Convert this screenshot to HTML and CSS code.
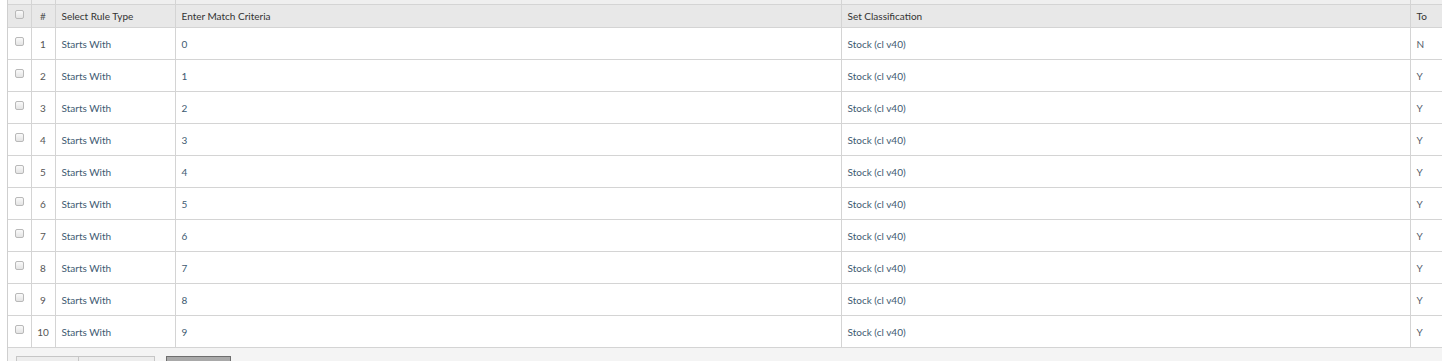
FILE: index.html
```html
<!DOCTYPE html>
<html lang="en">
<head>
  <meta charset="UTF-8" />
  <title>Classification Rules</title>
  <link rel="stylesheet" href="styles.css">
</head>
<body>

  <div class="panel">
    <div class="grid-wrap">
      <table class="rules">
        <colgroup>
          <col class="c-check">
          <col class="c-num">
          <col class="c-type">
          <col class="c-crit">
          <col class="c-class">
          <col class="c-to">
        </colgroup>
        <thead>
          <tr class="group-row">
            <th></th><th></th><th></th><th></th><th></th><th></th>
          </tr>
          <tr class="head-row">
            <th class="check"><input type="checkbox" class="box"></th>
            <th class="num">#</th>
            <th>Select Rule Type</th>
            <th>Enter Match Criteria</th>
            <th>Set Classification</th>
            <th>To</th>
          </tr>
        </thead>
        <tbody id="rows"></tbody>
      </table>
    </div>

    <div class="footer">
      <div class="btn-group">
        <button class="btn">&nbsp;</button>
        <button class="btn wide">&nbsp;</button>
      </div>
      <button class="btn dark">&nbsp;</button>
    </div>
  </div>

  <script>
    const rows = document.getElementById("rows");
    for (let i = 0; i < 10; i++) {
      const tr = document.createElement("tr");
      tr.innerHTML = `
        <td class="check"><input type="checkbox" class="box"></td>
        <td class="num">${i + 1}</td>
        <td>Starts With</td>
        <td>${i}</td>
        <td>Stock (cl v40)</td>
        <td class="flag">${i === 0 ? "N" : "Y"}</td>
      `;
      rows.appendChild(tr);
    }
  </script>

</body>
</html>
```

FILE: styles.css
```css
body {
  margin: 0;
  font-family: Lato, "Open Sans", sans-serif;
  font-size: 10px;
  background: #fff;
  color: #333;
  overflow: hidden;
}

.panel {
  margin-left: 7px;
  border-left: 1px solid #cfcfcf;
  height: 361px;
  overflow: hidden;
  display: flex;
  flex-direction: column;
}

.grid-wrap {
  overflow: hidden;
  flex: none;
}

.rules {
  border-collapse: collapse;
  table-layout: fixed;
  width: 1494px;
}

.c-check { width: 23px; }
.c-num { width: 24px; }
.c-type { width: 120px; }
.c-crit { width: 666px; }
.c-class { width: 569px; }
.c-to { width: 92px; }

.rules th,
.rules td {
  border: 1px solid #d4d4d4;
  padding: 0 6px;
  text-align: left;
  white-space: nowrap;
}

.rules tr > :first-child {
  border-left: none;
}

.group-row th {
  height: 4px;
  padding: 0;
  background: #efefef;
  border-top: none;
}

.head-row th {
  height: 22px;
  background: #e8e8e8;
  font-weight: normal;
  color: #333;
}

.rules td {
  height: 31px;
  color: #405a71;
}

.rules .check {
  padding: 0;
  text-align: center;
}

.rules .num {
  padding: 0;
  text-align: center;
  color: #555;
}

.rules td.flag {
  color: #55606b;
}

.box {
  appearance: none;
  display: block;
  width: 9px;
  height: 9px;
  margin: 0 auto;
  position: relative;
  top: -2px;
  border: 1px solid #b9b9b9;
  border-radius: 2px;
  background: linear-gradient(#fafafa, #e4e4e4);
}

.footer {
  flex: 1;
  display: flex;
  align-items: flex-start;
  gap: 11px;
  padding: 8px 8px 0;
  background: #f4f4f4;
}

.btn-group {
  display: flex;
}

.btn {
  height: 22px;
  width: 63px;
  border: 1px solid #c6c6c6;
  background: #ededed;
  padding: 0;
  font-family: inherit;
}

.btn.wide {
  width: 76px;
  border-left: none;
}

.btn.dark {
  width: 65px;
  border-color: #6e6e6e;
  background: #a9a9a9;
}
```
